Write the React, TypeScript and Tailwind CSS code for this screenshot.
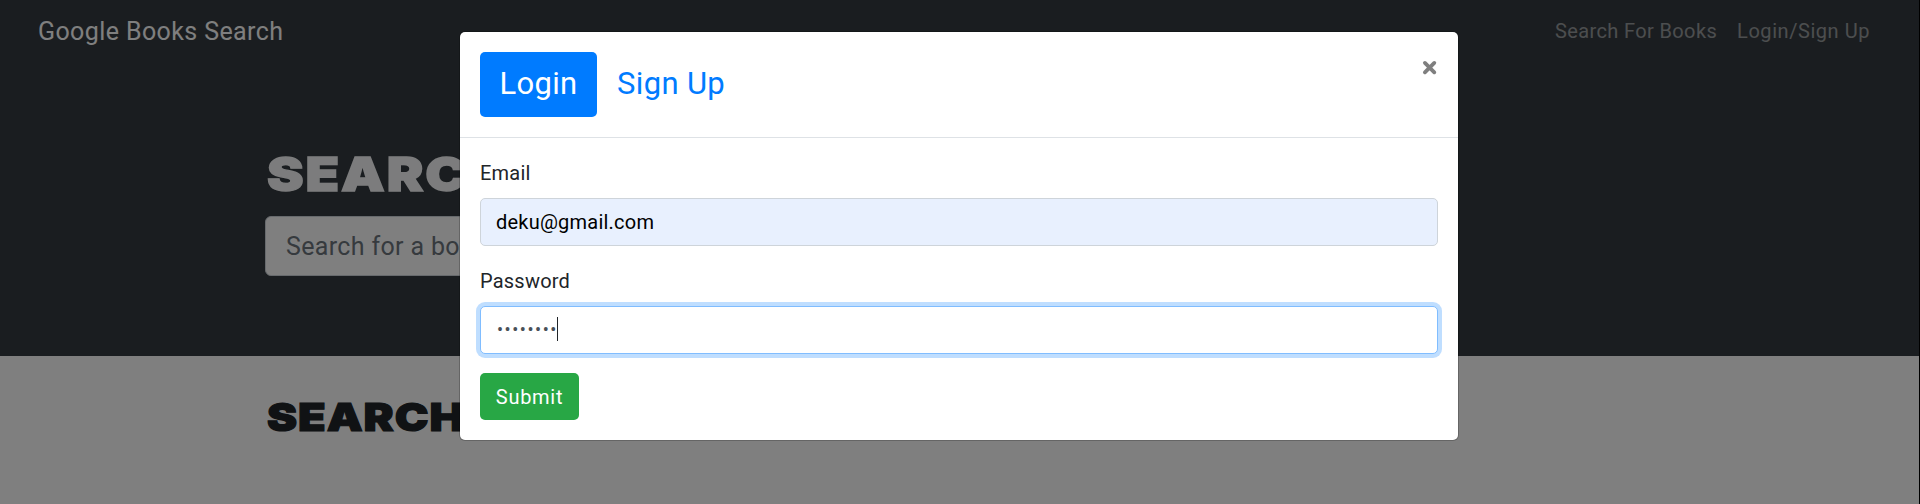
import React from "react";

function Navbar() {
  return (
    <nav className="flex h-[62px] shrink-0 items-center justify-between pl-[38px] pr-[49px]">
      <a className="whitespace-nowrap text-[25px] leading-none tracking-[0.4px] text-white">Google Books Search</a>
      <div className="flex items-center gap-5 text-[20px] leading-none text-white/50">
        <a className="whitespace-nowrap tracking-[0.37px]">Search For Books</a>
        <a className="whitespace-nowrap tracking-[0.55px]">Login/Sign Up</a>
      </div>
    </nav>
  );
}

function Page() {
  return (
    <div className="h-[504px] w-[1920px] overflow-hidden bg-black pr-px">
      <header className="flex h-[356px] flex-col bg-[#343a40]">
        <Navbar />
        <div className="mt-[88px] w-[1390px] pl-[265px]">
          <h1 className="ml-[2px] h-[48px] origin-left scale-x-[1.17] whitespace-nowrap font-[Inter] text-[47px] font-black leading-[48px] tracking-[1.6px] text-[#f8f9fa] [-webkit-text-stroke:1.4px_#f8f9fa]">
            SEARCH
          </h1>
          <div className="mt-[18px] flex h-[60px] items-center rounded-md border border-[#ced4da] bg-white pl-[20px] pt-[2px] text-[25px] tracking-[0.35px] text-[#6c757d]">
            Search for a book
          </div>
        </div>
      </header>
      <main className="h-[148px] bg-white pl-[267px] pt-[41px]">
        <h2 className="origin-left scale-x-[1.16] whitespace-nowrap font-[Inter] text-[39px] font-black leading-[40px] tracking-[0.8px] text-[#212529] [-webkit-text-stroke:1.2px_#212529]">
          SEARCH
        </h2>
      </main>
    </div>
  );
}

function AuthModal() {
  return (
    <section className="flex h-[408px] w-[998px] flex-col rounded-[5px] bg-white text-[20px] tracking-[0.22px] text-[#212529] shadow-[0_0_0_1px_rgba(0,0,0,0.2)]">
      <div className="flex h-[106px] items-start justify-between border-b border-[#dee2e6] px-5 pt-5">
        <div className="flex h-[65px] text-[31px] leading-none tracking-[0.35px]">
          <button className="flex w-[117px] items-center justify-center rounded-[5px] bg-[#007bff] pb-[2px] text-white">Login</button>
          <button className="ml-5 flex items-center whitespace-nowrap pb-[2px] text-[#007bff]">Sign Up</button>
        </div>
        <button className="mr-px mt-[8px] text-[#7f7f7f]" aria-label="Close">
          <svg width="15" height="15" viewBox="0 0 15 15" fill="none" stroke="currentColor" strokeWidth="3.8" strokeLinecap="round">
            <path d="M2.9 2.9 12.3 12.3M12.3 2.9 2.9 12.3" />
          </svg>
        </button>
      </div>
      <form className="flex flex-col px-5 pt-5">
        <label className="h-[30px] leading-[30px]">Email</label>
        <div className="mt-[10px] flex h-[48px] items-center rounded-[5px] border border-[#ced4da] bg-[#e8f0fe] pl-[15px] text-black">
          deku@gmail.com
        </div>
        <label className="mt-5 h-[30px] leading-[30px]">Password</label>
        <div className="mt-[10px] flex h-[48px] items-center rounded-[5px] border border-[#80bdff] bg-white pl-[16px] text-[#495057] shadow-[0_0_0_4px_rgba(0,123,255,0.25)]">
          <span className="w-[60px] whitespace-nowrap text-[18px] leading-none tracking-[1.55px]">••••••••</span>
          <span className="mb-[2px] h-6 w-px bg-[#212529]" />
        </div>
        <button className="mt-[19px] flex h-[47px] w-[99px] items-center justify-center rounded-[5px] bg-[#28a745] tracking-[0.7px] text-white">Submit</button>
      </form>
    </section>
  );
}

export default function App() {
  return (
    <div className="relative h-[504px] w-[1920px] overflow-hidden font-[Roboto,sans-serif]">
      <Page />
      <div className="absolute inset-0 flex items-start bg-black/50 pl-[460px] pt-[32px]">
        <AuthModal />
      </div>
    </div>
  );
}
